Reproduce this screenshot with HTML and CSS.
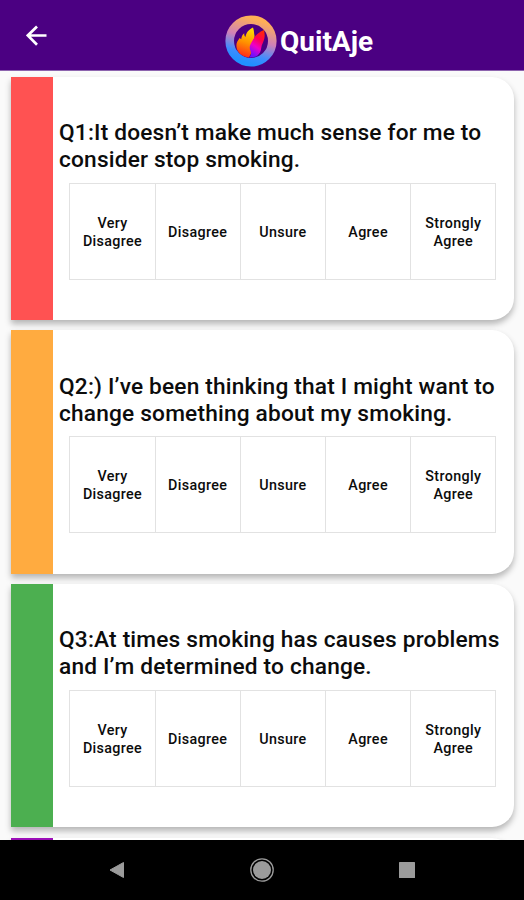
FILE: index.html
```html
<!doctype html>
<html>

<head>
    <meta charset="utf-8">
    <title>QuitAje</title>
    <link rel="stylesheet" href="styles.css">
</head>

<body>
<div class="header">
    <svg class="back" width="22" height="22" viewBox="0 0 22 22">
        <path d="M20.500 10.500H2.500M11 1.500L1.800 10.500l9.200 9.200" fill="none" stroke="#fff" stroke-width="2.700"/>
    </svg>
    <div class="brand">
        <svg class="logo" width="52" height="52" viewBox="0 0 52 52">
            <defs>
                <linearGradient id="ring" x1="0.65" y1="0" x2="0.35" y2="1">
                    <stop offset="0" stop-color="#ffb056"/>
                    <stop offset="0.45" stop-color="#cf80b8"/>
                    <stop offset="0.8" stop-color="#3d8cff"/>
                    <stop offset="1" stop-color="#2090ff"/>
                </linearGradient>
                <linearGradient id="flame1" x1="0.6" y1="0" x2="0.4" y2="1">
                    <stop offset="0" stop-color="#ffe100"/>
                    <stop offset="0.5" stop-color="#ff9000"/>
                    <stop offset="1" stop-color="#ff2418"/>
                </linearGradient>
                <linearGradient id="flame2" x1="0.8" y1="0" x2="0.4" y2="1">
                    <stop offset="0" stop-color="#ff2a00"/>
                    <stop offset="0.35" stop-color="#ff0050"/>
                    <stop offset="0.65" stop-color="#f000c8"/>
                    <stop offset="1" stop-color="#7010ff"/>
                </linearGradient>
            </defs>
            <circle cx="26" cy="26" r="21.3" fill="none" stroke="url(#ring)" stroke-width="8.6"/>
            <path d="M28 12.500c-4 2-7 5-7.500 9.500c-1-1-1.300-2-1.300-3.800c-2 1.500-2.500 3-3 6l-1.500-1.200c-2 2.500-3.500 5-3.300 8c.3 6 5 10.500 12.600 11.500l4-8l-.5-8c2-2.500 2.500-5 1.700-7.500c-.2-2.500-.5-4.500-1.200-6.500z" fill="url(#flame1)"/>
            <path d="M39 15c-5 2-8.500 5-10.500 9c-1.500 3-3.500 5-3.800 8c-.2 3 1.800 4.500 1.300 7.500l-1.500 3c5 .2 8.500-1.500 10.500-5c1.500-3 .8-6 3-10c2-4 2-8 1-12.500z" fill="url(#flame2)"/>
        </svg>
        <h1>QuitAje</h1>
    </div>
</div>
<div class="list">
    <div class="card red">
        <h2>Q1:It doesn’t make much sense for me to<br>consider stop smoking.</h2>
        <ul>
            <li>Very<br>Disagree</li>
            <li>Disagree</li>
            <li>Unsure</li>
            <li>Agree</li>
            <li>Strongly<br>Agree</li>
        </ul>
    </div>
    <div class="card orange">
        <h2>Q2:) I’ve been thinking that I might want to<br>change something about my smoking.</h2>
        <ul>
            <li>Very<br>Disagree</li>
            <li>Disagree</li>
            <li>Unsure</li>
            <li>Agree</li>
            <li>Strongly<br>Agree</li>
        </ul>
    </div>
    <div class="card green">
        <h2>Q3:At times smoking has causes problems<br>and I’m determined to change.</h2>
        <ul>
            <li>Very<br>Disagree</li>
            <li>Disagree</li>
            <li>Unsure</li>
            <li>Agree</li>
            <li>Strongly<br>Agree</li>
        </ul>
    </div>
    <div class="card purple"></div>
</div>
<div class="navbar">
    <svg width="18" height="18" viewBox="0 0 18 18">
        <path d="M2 9l13.500-7.500v15z" fill="#9b9b9b" stroke="#9b9b9b" stroke-linejoin="round"/>
    </svg>
    <svg width="24" height="24" viewBox="0 0 24 24">
        <circle cx="12" cy="12" r="9" fill="#9b9b9b"/>
        <circle cx="12" cy="12" r="11.200" fill="none" stroke="#9b9b9b" stroke-width="1.300"/>
    </svg>
    <svg width="18" height="18" viewBox="0 0 18 18">
        <rect x="1" y="1" width="16" height="16" rx="0.500" fill="#9b9b9b"/>
    </svg>
</div>
</body>

</html>
```
FILE: styles.css
```css
* {
    padding: 0;
    margin: 0;
    list-style: none;
    box-sizing: border-box;
}

body {
    width: 524px;
    height: 900px;
    overflow: hidden;
    display: flex;
    flex-direction: column;
    background: #fafafa;
    font-family: Roboto, sans-serif;
    color: #0c0c0c;
}

.header {
    height: 71px;
    flex-shrink: 0;
    display: flex;
    background: #4b0082;
    border-bottom: 1px solid #8d64ae;
}

.back {
    margin: 25px 0 0 26px;
}

.brand {
    display: flex;
    margin: 15px 0 0 177px;
}

.brand h1 {
    margin-left: 3px;
    font-size: 28px;
    line-height: 54px;
    font-weight: 700;
    color: #fff;
}

.list {
    flex: 1;
    min-height: 0;
    overflow: hidden;
    padding: 5.6px 10px 0 11px;
}

.card {
    height: 243.3px;
    margin-bottom: 10.4px;
    padding: 42.4px 0 0 6px;
    border-left: 42px solid;
    border-radius: 0 22px 22px 0;
    background: #fff;
    box-shadow: 0 4px 6px rgba(0, 0, 0, 0.28);
}

.red {
    border-color: #ff5252;
}

.orange {
    border-color: #ffab40;
}

.green {
    border-color: #4caf50;
}

.purple {
    border-color: #9c0fb8;
}

.card h2 {
    font-size: 22.7px;
    line-height: 27px;
    font-weight: 500;
    letter-spacing: 0.18px;
    white-space: nowrap;
}

.card ul {
    display: flex;
    width: 427px;
    height: 97px;
    margin: 9.600px 0 0 10.400px;
    border: 1px solid #e2e2e2;
}

.card li {
    flex: 1;
    display: flex;
    align-items: center;
    justify-content: center;
    padding-top: 1px;
    text-align: center;
    font-size: 14.3px;
    line-height: 18px;
    font-weight: 500;
    letter-spacing: 0.35px;
}

.card li + li {
    border-left: 1px solid #e2e2e2;
}

.navbar {
    height: 60px;
    flex-shrink: 0;
    display: flex;
    align-items: center;
    justify-content: center;
    gap: 124px;
    background: #000;
}
```
